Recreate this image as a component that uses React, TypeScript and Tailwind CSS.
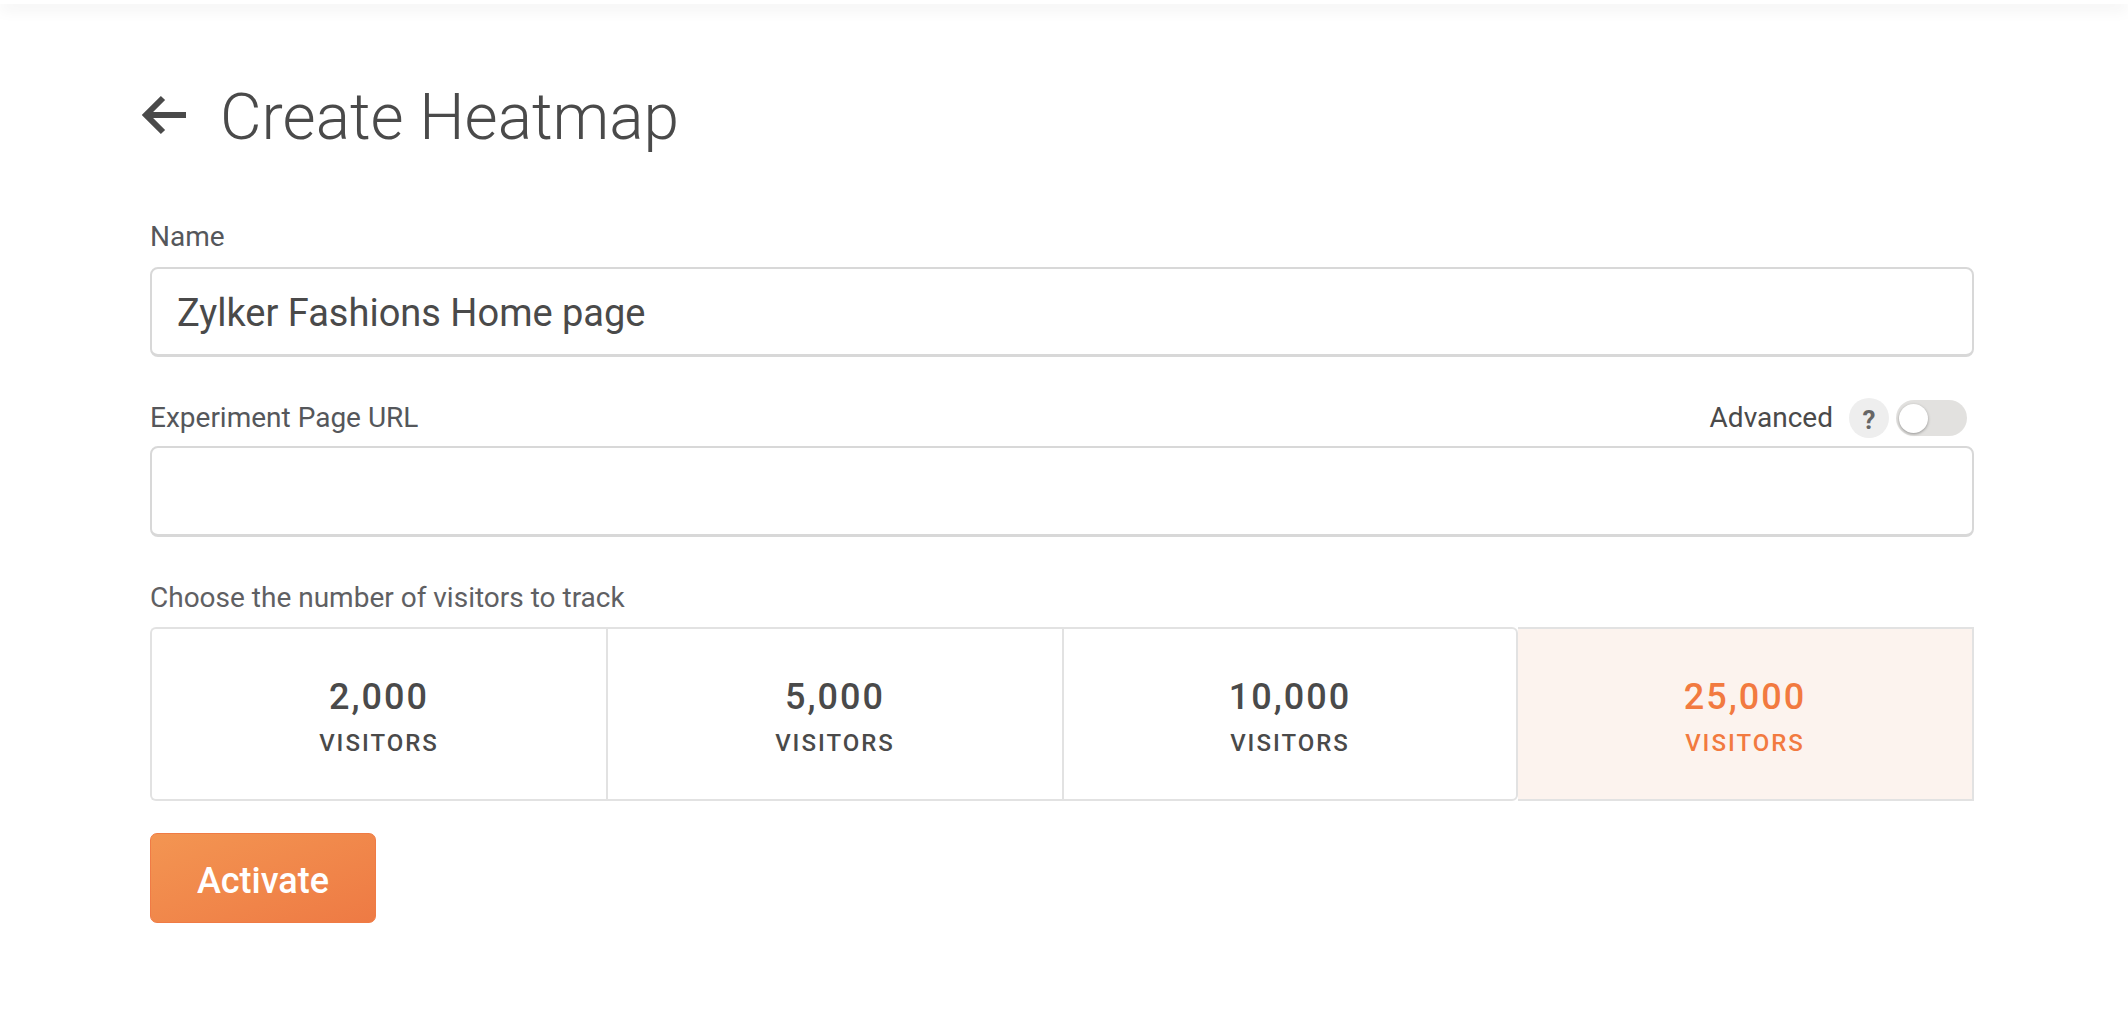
import React from "react";

const fontFamily = { fontFamily: "Roboto, sans-serif" };

const plans = [
  { count: "2,000", cls: "border-r-0 rounded-l-[6px] text-[#4a4a4a] bg-white" },
  { count: "5,000", cls: "border-r-0 text-[#4a4a4a] bg-white" },
  { count: "10,000", cls: "rounded-r-[6px] text-[#4a4a4a] bg-white" },
  { count: "25,000", cls: "border-l-0 text-[#f27a40] bg-[#fcf3ee]" },
];

const ArrowBack = () => (
  <svg width="46" height="40" viewBox="0 0 46 40" fill="none" stroke="#4a4a4a" strokeWidth="6" className="relative -top-[3px] -left-[1px]">
    <path d="M45 20H6" />
    <path d="M22 3 5 20l17 17" />
  </svg>
);

const App: React.FC = () => {
  return (
    <div className="min-h-[1034px] bg-white text-[#4a4a4a]" style={fontFamily}>
      <div className="h-[4px] bg-white shadow-[0_3px_16px_rgba(0,0,0,0.14)]" />
      <div className="px-[150px] pt-[76px] w-[2124px]">
        <div className="-ml-[8px] flex h-[76px] items-center gap-[32px]">
          <ArrowBack />
          <h1 className="text-[64px] font-light leading-[76px] text-[#4a4a4a]">Create Heatmap</h1>
        </div>

        <label className="block mt-[65px] text-[28px] leading-[32px] text-[#55575b]">Name</label>
        <input
          readOnly
          value="Zylker Fashions Home page"
          className="mt-[14px] block h-[90px] w-full rounded-[8px] border-2 border-[#d8d8d8] border-b-[3px] px-[25px] pt-[2px] text-[38px] text-[#4a4a4a] outline-none"
        />

        <div className="mt-[43px] flex h-[36px] items-center justify-between">
          <label className="text-[28px] leading-[32px] text-[#55575b]">Experiment Page URL</label>
          <div className="flex items-center pr-[7px]">
            <span className="text-[28px] leading-[32px]">Advanced</span>
            <span className="ml-[16px] flex h-[40px] w-[40px] items-center justify-center rounded-full bg-[#eeeeee] pt-[5px] text-[26px] font-bold text-[#666666]">?</span>
            <span className="ml-[7px] flex h-[36px] w-[71px] items-center rounded-full bg-[#e2e1df] pl-[3px]">
              <span className="h-[29px] w-[29px] rounded-full bg-white shadow-[0_1px_3px_rgba(0,0,0,0.35)]" />
            </span>
          </div>
        </div>
        <div className="mt-[10px] h-[91px] w-full rounded-[8px] border-2 border-[#d8d8d8] border-b-[3px]" />

        <label className="block mt-[45px] text-[28px] leading-[32px] text-[#5f6063]">Choose the number of visitors to track</label>
        <div className="mt-[13px] grid grid-cols-4">
          {plans.map((plan) => (
            <div key={plan.count} className={`flex h-[174px] flex-col items-center border-2 border-[#e2e2e2] pt-[47px] font-medium ${plan.cls}`}>
              <span className="text-[36px] leading-[42px] tracking-[2px]">{plan.count}</span>
              <span className="mt-[11px] text-[24px] leading-[28px] tracking-[2px]">VISITORS</span>
            </div>
          ))}
        </div>

        <button className="mt-[32px] h-[90px] w-[226px] rounded-[7px] border border-[#f07b45] bg-gradient-to-br from-[#f39552] to-[#ee7a44] pt-[5px] text-[36px] font-medium text-white">
          Activate
        </button>
      </div>
    </div>
  );
};

export default App;
